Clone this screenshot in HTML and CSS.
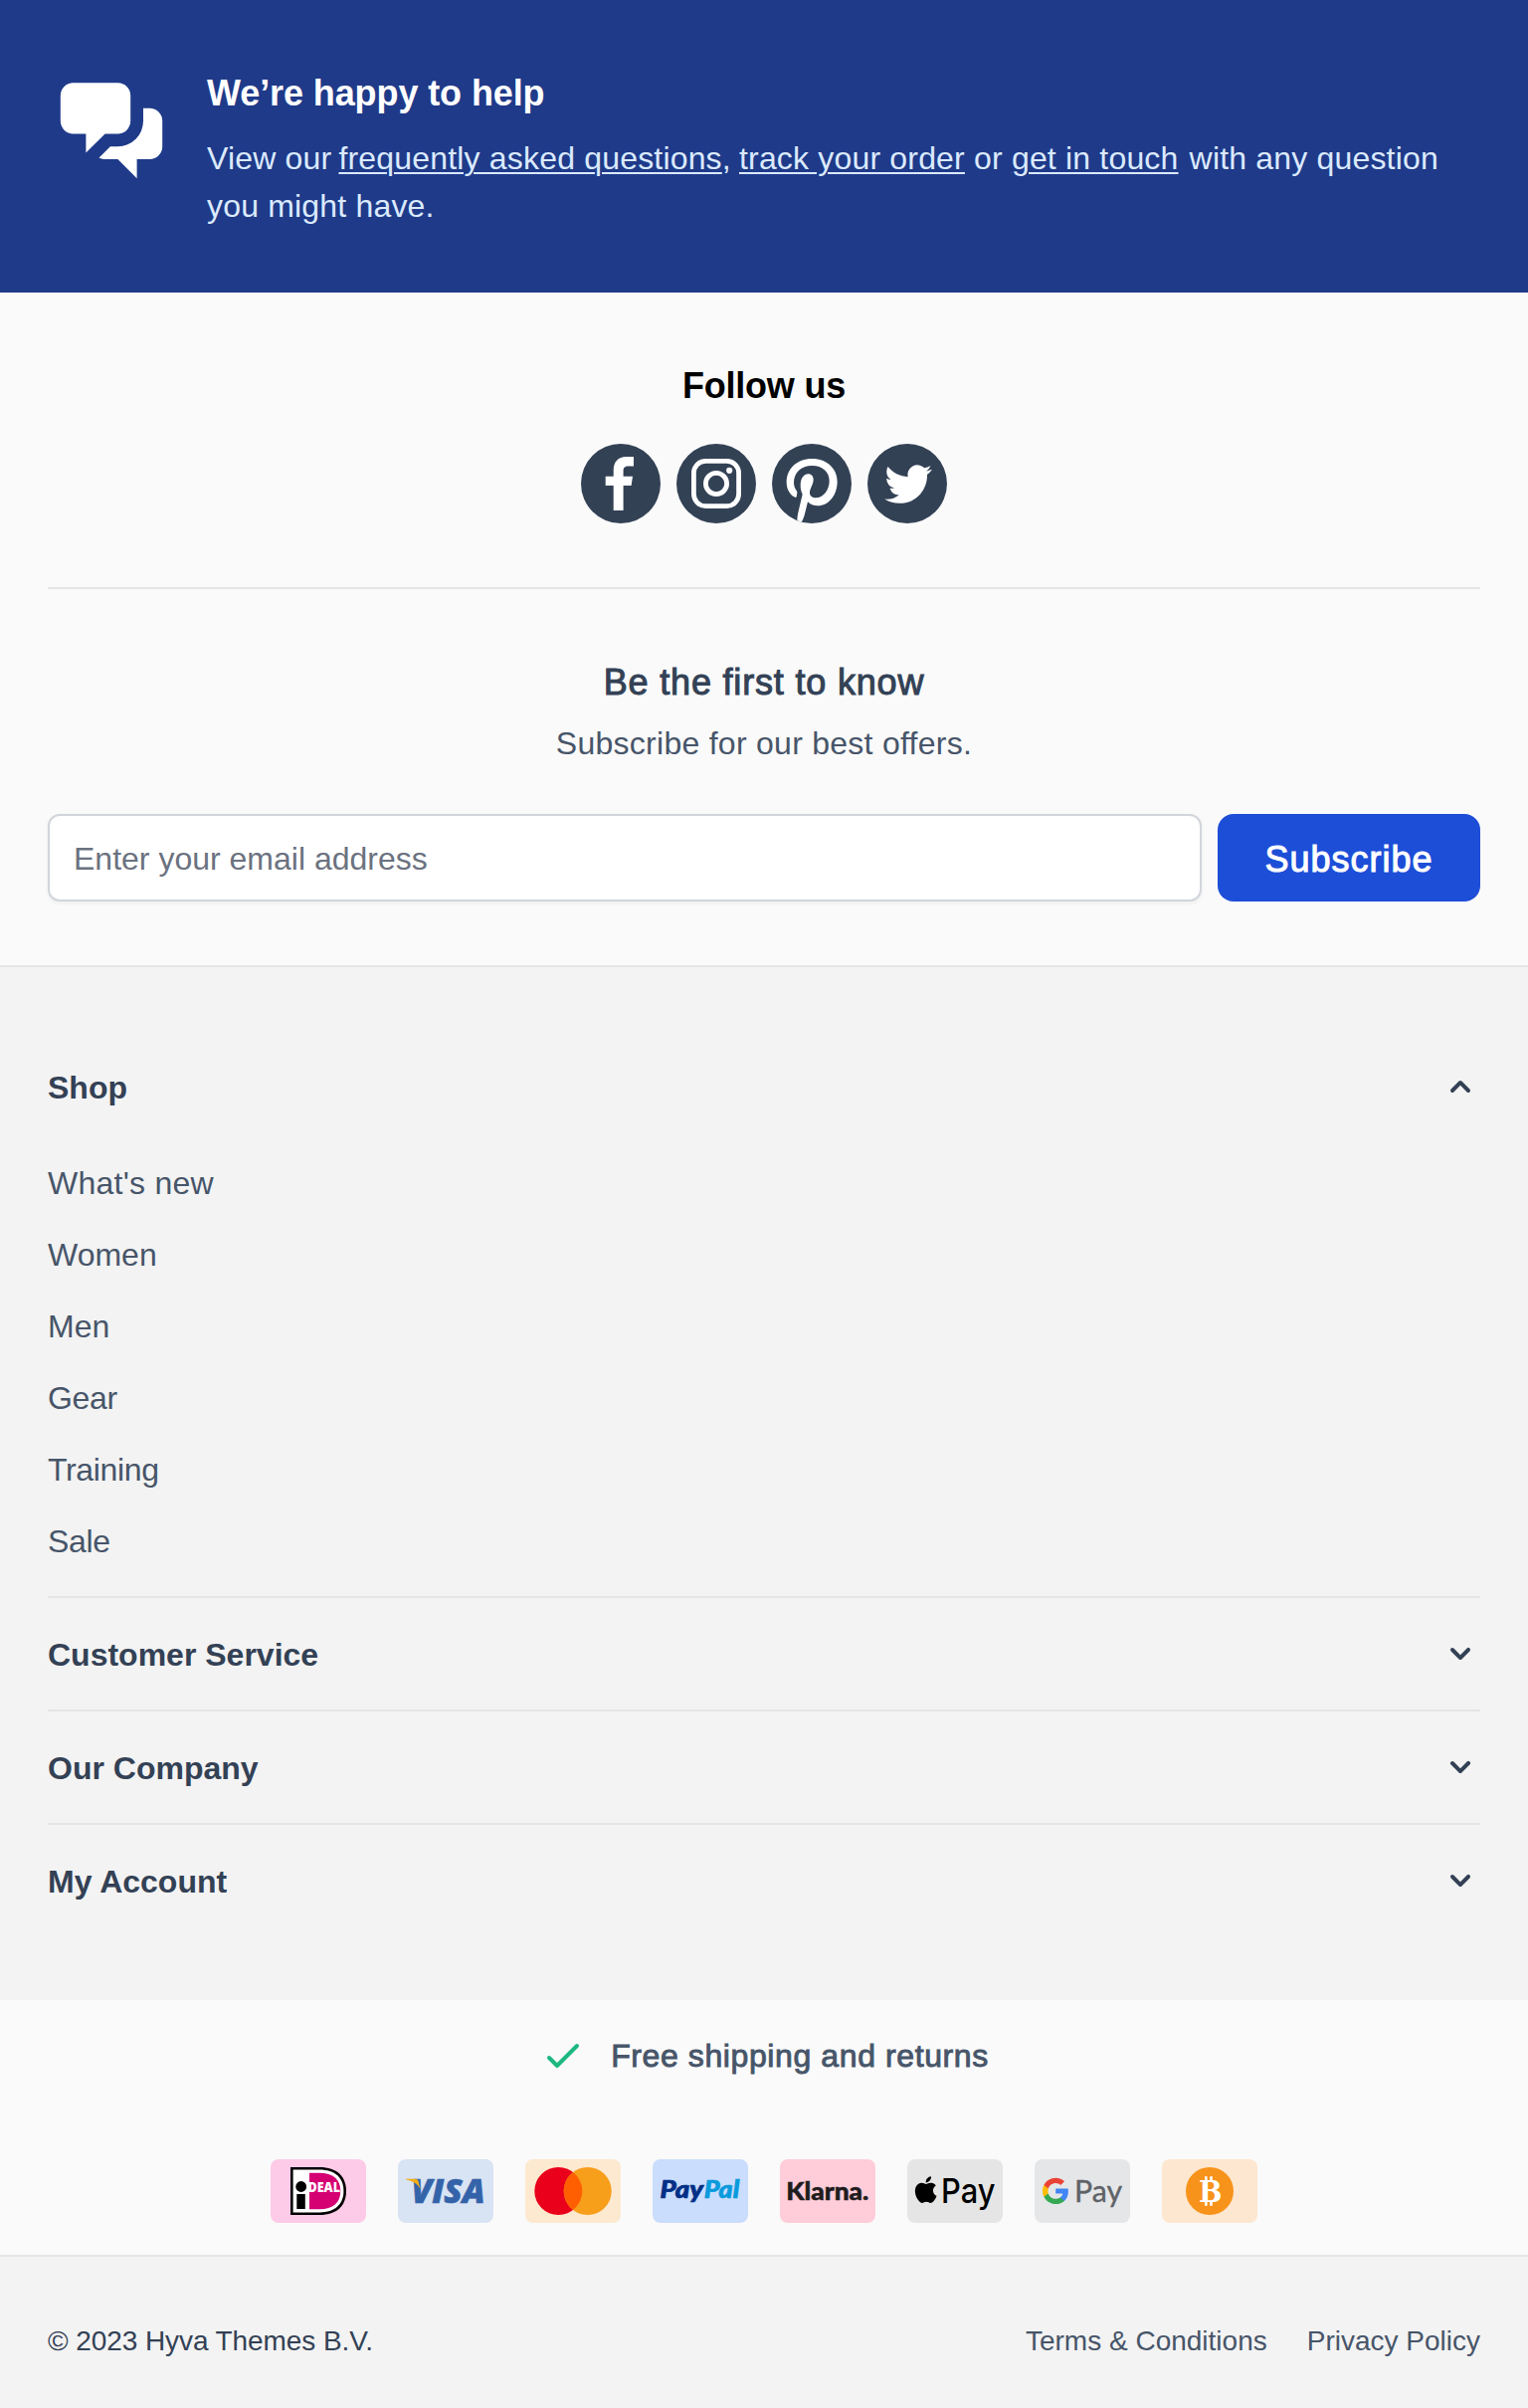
FILE: index.html
```html
<!DOCTYPE html>
<html lang="en">
<head>
<meta charset="utf-8">
<title>Footer</title>
<link rel="stylesheet" href="styles.css">
</head>
<body>
<section class="help">
  <svg class="help-icon" viewBox="0 0 20 20" fill="currentColor" aria-hidden="true"><path d="M2 5a2 2 0 012-2h7a2 2 0 012 2v4a2 2 0 01-2 2H9l-3 3v-3H4a2 2 0 01-2-2V5z"/><path d="M15 7v2a4 4 0 01-4 4H9.828l-1.766 1.767c.28.149.599.233.938.233h2l3 3v-3h2a2 2 0 002-2V9a2 2 0 00-2-2h-1z"/></svg>
  <div class="help-body">
    <h2 class="help-title">We’re happy to help</h2>
    <p class="help-text">View our <a href="#">frequently asked questions</a>, <a href="#">track your order</a> or <a href="#">get in touch</a> with any question you might have.</p>
  </div>
</section>

<section class="connect">
  <div class="follow">
    <h2 class="follow-title">Follow us</h2>
    <div class="social">
      <a class="social-link" href="#" aria-label="Facebook"><svg viewBox="0 0 80 80"><path d="M32.7 67V42h-8v-9.3h8V27C32.7 18 37.5 13 45.5 13H53v9.5h-5.2c-3.8 0-5.2 1.6-5.2 4.8v5.4h9.4L50.6 42h-8v25z"/></svg></a>
      <a class="social-link" href="#" aria-label="Instagram"><svg viewBox="0 0 80 80"><rect class="ring" x="17.4" y="17.4" width="45.2" height="45.2" rx="12"/><circle class="ring" cx="40" cy="40" r="10.6"/><circle cx="53.2" cy="26.8" r="3.1"/></svg></a>
      <a class="social-link" href="#" aria-label="Pinterest"><svg viewBox="0 0 240 240"><path d="M72 162C58 158 44 140 44 117C44 75 75 45 121 45C167 45 197 76 197 114C197 155 171 187 138 187C126 187 115 183 108 175L98 215C95 226 90 235 86 240L77 240C75 228 77 216 80 203L92 152C88 144 86 136 86 126C86 103 97 91 109 91C119 91 125 98 125 108C125 122 114 135 114 148C114 158 122 163 132 163C155 163 173 140 173 112C173 84 152 66 121 66C88 66 66 87 66 118C66 128 70 136 74 141C77 145 76 149 75 154C74 160 73 163 72 162Z"/></svg></a>
      <a class="social-link" href="#" aria-label="Twitter"><svg viewBox="0 0 80 80"><path transform="translate(17.3 16.8) scale(1.98)" d="M23.953 4.57a10 10 0 01-2.825.775 4.958 4.958 0 002.163-2.723c-.951.555-2.005.959-3.127 1.184a4.92 4.92 0 00-8.384 4.482C7.69 8.095 4.067 6.13 1.64 3.162a4.822 4.822 0 00-.666 2.475c0 1.71.87 3.213 2.188 4.096a4.904 4.904 0 01-2.228-.616v.06a4.923 4.923 0 003.946 4.827 4.996 4.996 0 01-2.212.085 4.936 4.936 0 004.604 3.417 9.867 9.867 0 01-6.102 2.105c-.39 0-.779-.023-1.17-.067a13.995 13.995 0 007.557 2.209c9.053 0 13.998-7.496 13.998-13.985 0-.21 0-.42-.015-.63A9.935 9.935 0 0024 4.59z"/></svg></a>
    </div>
  </div>
  <div class="newsletter">
    <h2 class="newsletter-title">Be the first to know</h2>
    <p class="newsletter-text">Subscribe for our best offers.</p>
    <form class="newsletter-form">
      <input class="email" type="email" placeholder="Enter your email address">
      <button class="subscribe" type="button">Subscribe</button>
    </form>
  </div>
</section>

<nav class="menus">
  <section class="menu">
    <h3 class="menu-title"><span>Shop</span><svg class="chevron" viewBox="0 0 20 20"><path d="M14.707 12.707a1 1 0 01-1.414 0L10 9.414l-3.293 3.293a1 1 0 01-1.414-1.414l4-4a1 1 0 011.414 0l4 4a1 1 0 010 1.414z"/></svg></h3>
    <ul class="menu-links">
      <li><a class="looser" href="#">What's new</a></li>
      <li><a href="#">Women</a></li>
      <li><a href="#">Men</a></li>
      <li><a class="tighter" href="#">Gear</a></li>
      <li><a class="tighter" href="#">Training</a></li>
      <li><a class="tighter" href="#">Sale</a></li>
    </ul>
  </section>
  <section class="menu">
    <h3 class="menu-title"><span>Customer Service</span><svg class="chevron" viewBox="0 0 20 20"><path d="M5.293 7.293a1 1 0 011.414 0L10 10.586l3.293-3.293a1 1 0 111.414 1.414l-4 4a1 1 0 01-1.414 0l-4-4a1 1 0 010-1.414z"/></svg></h3>
  </section>
  <section class="menu">
    <h3 class="menu-title"><span>Our Company</span><svg class="chevron" viewBox="0 0 20 20"><path d="M5.293 7.293a1 1 0 011.414 0L10 10.586l3.293-3.293a1 1 0 111.414 1.414l-4 4a1 1 0 01-1.414 0l-4-4a1 1 0 010-1.414z"/></svg></h3>
  </section>
  <section class="menu">
    <h3 class="menu-title"><span>My Account</span><svg class="chevron" viewBox="0 0 20 20"><path d="M5.293 7.293a1 1 0 011.414 0L10 10.586l3.293-3.293a1 1 0 111.414 1.414l-4 4a1 1 0 01-1.414 0l-4-4a1 1 0 010-1.414z"/></svg></h3>
  </section>
</nav>

<section class="assurance">
  <p class="usp"><svg class="check" viewBox="0 0 24 24"><path d="M5 13l4 4L19 7"/></svg><span>Free shipping and returns</span></p>
  <div class="payments">
    <svg class="card card-ideal" viewBox="0 0 96 64" role="img" aria-label="iDEAL">
      <path d="M20 8H49C67 8 76 17.500 76 32S67 56 49 56H20Z" fill="#000"/><path d="M22.600 10.600H49C65 10.600 73.400 19 73.400 32S65 53.400 49 53.400H22.600Z" fill="#fff"/><path d="M39 13.700H49C63 13.700 70.300 20.500 70.300 32S63 50.300 49 50.300H39Z" fill="#d50172"/><circle cx="30.700" cy="27.500" r="5.400"/><path d="M26.300 35H34.800V50H26.300Z"/>
      <text x="37.500" y="32.500" class="ideal-word" textLength="32.500" lengthAdjust="spacingAndGlyphs">DEAL</text>
    </svg>
    <svg class="card card-visa" viewBox="0 0 96 64" role="img" aria-label="Visa"><text x="13.500" y="43.800" class="visa-word" textLength="74" lengthAdjust="spacingAndGlyphs">VISA</text><path d="M8 19.700H17C19 19.700 20 20.500 20.500 22L22.600 30C20 25 15 21.500 8 20.500Z" fill="#f2ae14"/></svg>
    <svg class="card card-mastercard" viewBox="0 0 96 64" role="img" aria-label="Mastercard"><circle cx="33.300" cy="32" r="24" fill="#eb001b"/><circle cx="62.700" cy="32" r="24" fill="#f79e1b"/><path d="M48 13A24 24 0 0148 51A24 24 0 0148 13Z" fill="#ff5f00"/></svg>
    <svg class="card card-paypal" viewBox="0 0 96 64" role="img" aria-label="PayPal"><text x="7.500" y="39.300" class="paypal-word paypal-dark" textLength="43.500" lengthAdjust="spacingAndGlyphs">Pay</text><text x="51.700" y="39.300" class="paypal-word paypal-light" textLength="35.500" lengthAdjust="spacingAndGlyphs">Pal</text></svg>
    <svg class="card card-klarna" viewBox="0 0 96 64" role="img" aria-label="Klarna"><text x="6.300" y="40.700" class="klarna-word" textLength="83" lengthAdjust="spacingAndGlyphs">Klarna.</text></svg>
    <svg class="card card-apple" viewBox="0 0 96 64" role="img" aria-label="Apple Pay"><path transform="translate(5.400 17.300) scale(1.110)" d="M12.152 6.896c-.948 0-2.415-1.078-3.96-1.04-2.04.027-3.91 1.183-4.961 3.014-2.117 3.675-.546 9.103 1.519 12.09 1.013 1.454 2.208 3.09 3.792 3.039 1.52-.065 2.09-.987 3.935-.987 1.831 0 2.35.987 3.96.948 1.637-.026 2.676-1.48 3.676-2.948 1.156-1.688 1.636-3.325 1.662-3.415-.039-.013-3.182-1.221-3.22-4.857-.026-3.04 2.48-4.494 2.597-4.559-1.429-2.09-3.623-2.324-4.39-2.376-2-.156-3.675 1.09-4.61 1.09zM15.53 3.83c.843-1.012 1.4-2.427 1.245-3.83-1.207.052-2.662.805-3.532 1.818-.78.896-1.454 2.338-1.273 3.714 1.338.104 2.715-.688 3.559-1.701"/><text x="34" y="44" class="apple-word" textLength="54.500" lengthAdjust="spacingAndGlyphs">Pay</text></svg>
    <svg class="card card-google" viewBox="0 0 96 64" role="img" aria-label="Google Pay"><g transform="translate(6.800 17.500) scale(1.200)"><path fill="#4285f4" d="M22.560 12.250c0-.78-.07-1.530-.2-2.250H12v4.260h5.920c-.26 1.370-1.040 2.530-2.210 3.310v2.770h3.570c2.080-1.920 3.280-4.740 3.280-8.090z"/><path fill="#34a853" d="M12 23c2.970 0 5.460-.98 7.280-2.660l-3.570-2.770c-.98.66-2.230 1.060-3.710 1.060-2.860 0-5.290-1.930-6.160-4.530H2.180v2.840C3.990 20.530 7.700 23 12 23z"/><path fill="#fbbc05" d="M5.840 14.090c-.22-.66-.35-1.360-.35-2.090s.13-1.430.35-2.090V7.070H2.180C1.430 8.550 1 10.220 1 12s.43 3.450 1.180 4.930l3.660-2.840z"/><path fill="#ea4335" d="M12 5.380c1.620 0 3.060.56 4.210 1.640l3.150-3.150C17.450 2.090 14.970 1 12 1 7.700 1 3.990 3.470 2.180 7.070l3.660 2.840c.87-2.600 3.300-4.530 6.160-4.530z"/></g><text x="40" y="43.300" class="google-word" textLength="48" lengthAdjust="spacingAndGlyphs">Pay</text></svg>
    <svg class="card card-bitcoin" viewBox="0 0 96 64" role="img" aria-label="Bitcoin"><circle cx="48" cy="32" r="24" fill="#f7931a"/><path d="M43 17.300h2.600v5H43zM48.200 17.300h2.600v5h-2.600zM43 41.700h2.600v5H43zM48.200 41.700h2.600v5h-2.600z" fill="#fff"/><text x="37" y="43" class="bitcoin-word" textLength="23.500" lengthAdjust="spacingAndGlyphs">B</text></svg>
  </div>
</section>

<footer class="legal">
  <span class="copyright">© 2023 Hyva Themes B.V.</span>
  <div class="legal-links"><a href="#">Terms &amp; Conditions</a><a href="#">Privacy Policy</a></div>
</footer>
</body>
</html>
```
FILE: styles.css
```css
*, *::before, *::after { box-sizing: border-box; }
body {
  margin: 0;
  background: #fafafa;
  color: #334155;
  font-family: "Liberation Sans", Arial, sans-serif;
  font-size: 32px;
  line-height: 48px;
}
h2, h3, p, ul { margin: 0; padding: 0; }
h2 { font-size: 36px; line-height: 56px; }
h3 { font-size: 32px; }
ul { list-style: none; }
a { color: inherit; text-decoration: none; }
svg { display: block; flex: none; }

.help {
  display: flex;
  gap: 32px;
  height: 294px;
  padding: 64px 48px;
  background: #1f3a89;
  color: #dbeafe;
}
.help-icon { width: 128px; height: 128px; color: #fff; }
.help-body { flex: 1; padding-top: 2px; }
.help-title { color: #fff; letter-spacing: -0.1px; }
.help-text { margin-top: 13px; letter-spacing: 0.18px; }
.help-text a {
  text-decoration: underline;
  text-decoration-thickness: 2px;
  text-underline-offset: 3px;
}
.help-text a:first-child { margin-left: -2px; }
.help-text a:nth-child(2) { margin-left: -1px; }
.help-text a:last-child { margin-right: 2px; }

.connect { padding: 0 48px; height: 676px; }
.follow {
  display: flex;
  flex-direction: column;
  align-items: center;
  gap: 30px;
  height: 298px;
  padding-top: 66px;
  border-bottom: 2px solid #e5e5e5;
}
.follow-title { color: #000; letter-spacing: -0.2px; }
.social { display: flex; gap: 16px; }
.social-link {
  width: 80px;
  height: 80px;
  overflow: hidden;
  border-radius: 50%;
  background: #334155;
}
.social-link svg { width: 80px; height: 80px; fill: #fff; }
.social-link .ring { fill: none; stroke: #fff; stroke-width: 4.8; }

.newsletter { padding-top: 66px; text-align: center; }
.newsletter-title {
  font-weight: 400;
  letter-spacing: 0.82px;
  -webkit-text-stroke: 1px currentColor;
}
.newsletter-text { margin-top: 9px; color: #475569; letter-spacing: 0.27px; }
.newsletter-form { display: flex; gap: 16px; margin-top: 47px; }
.email {
  flex: 1;
  min-width: 0;
  height: 88px;
  padding: 2px 24px 0;
  border: 2px solid #d1d5db;
  border-radius: 12px;
  background: #fff;
  box-shadow: 0 2px 4px rgba(0, 0, 0, 0.05);
  font: inherit;
}
.email::placeholder { color: #6b7280; opacity: 1; }
.subscribe {
  width: 264px;
  height: 88px;
  padding: 4px 0 0;
  border: 0;
  border-radius: 16px;
  background: #1d4ed8;
  color: #fff;
  font: inherit;
  font-size: 36px;
  letter-spacing: 1px;
  -webkit-text-stroke: 1px currentColor;
}

.menus {
  height: 1040px;
  padding: 64px 48px;
  border-top: 2px solid #e5e5e5;
  background: #f3f3f3;
}
.menu + .menu { border-top: 2px solid #e5e5e5; }
.menu-title {
  display: flex;
  align-items: center;
  justify-content: space-between;
  height: 112px;
}
.menu-title span { padding-top: 2px; }
.chevron { width: 40px; height: 40px; fill: #334155; }
.menu-links {
  display: flex;
  flex-direction: column;
  gap: 24px;
  padding: 17px 0 31px;
  color: #475569;
}
.looser { letter-spacing: 0.25px; }
.tighter { letter-spacing: -0.35px; }

.assurance { height: 256px; padding-top: 32px; }
.usp {
  display: flex;
  align-items: center;
  justify-content: center;
  gap: 24px;
  height: 48px;
  color: #475569;
  letter-spacing: 0.6px;
  -webkit-text-stroke: 0.9px currentColor;
}
.check {
  width: 48px;
  height: 48px;
  fill: none;
  stroke: #1db780;
  stroke-width: 2;
  stroke-linecap: round;
  stroke-linejoin: round;
}
.payments { display: flex; justify-content: center; gap: 32px; margin-top: 80px; }
.card { width: 96px; height: 64px; border-radius: 8px; }
.card-ideal { background: #fdcbe8; }
.card-visa { background: #d8e3f3; }
.card-mastercard { background: #fce9cf; }
.card-paypal { background: #cbddfd; }
.card-klarna { background: #fecdd9; }
.card-apple { background: #e5e5e5; }
.card-google { background: #e5e6e7; }
.card-bitcoin { background: #fee7d0; }
.ideal-word { fill: #fff; font: 800 13.5px "Open Sans", sans-serif; }
.visa-word { fill: #3463a9; stroke: #3463a9; stroke-width: 0.6; font: italic 800 33px "Open Sans", sans-serif; }
.paypal-word { font: italic 900 24px Lato, sans-serif; stroke-width: 0.7; }
.paypal-dark { fill: #002f86; stroke: #002f86; }
.paypal-light { fill: #0a9bdc; stroke: #0a9bdc; }
.klarna-word { fill: #201c1d; stroke: #201c1d; stroke-width: 0.5; font: 900 24.5px Lato, sans-serif; }
.apple-word { fill: #000; font: 500 34px Inter, sans-serif; }
.google-word { fill: #5f6368; stroke: #5f6368; stroke-width: 0.4; font: 400 31px Lato, sans-serif; }
.bitcoin-word { fill: #fff; font: bold 30.5px "DejaVu Serif", serif; }

.legal {
  display: flex;
  justify-content: space-between;
  height: 154px;
  padding: 65px 48px 0;
  border-top: 2px solid #e5e5e5;
  background: #f3f3f3;
  font-size: 28px;
  line-height: 40px;
}
.copyright { letter-spacing: -0.08px; }
.legal-links { display: flex; gap: 40px; color: #475569; }
```
